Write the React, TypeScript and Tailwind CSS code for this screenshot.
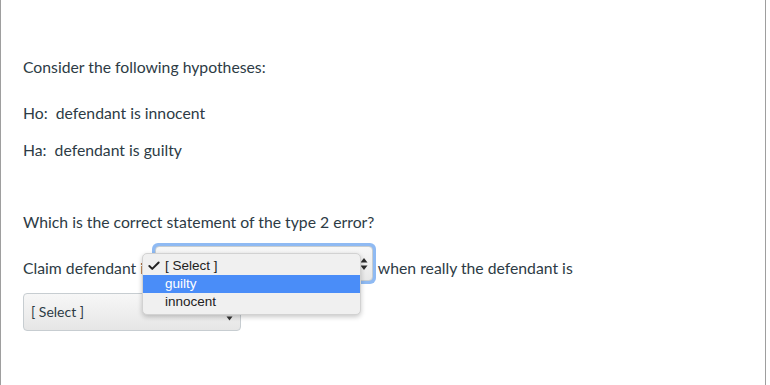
import { Check } from "lucide-react";

const menuOptions = [
  { label: "[ Select ]", checked: true },
  { label: "guilty", active: true },
  { label: "innocent" },
];

function UpDownArrows() {
  return (
    <svg width="8" height="14" viewBox="0 0 8 14" className="text-[#2b2b2b]">
      <path d="M4 1 L7.5 5.5 L0.5 5.5 Z" fill="currentColor" />
      <path d="M4 13 L7.5 8.5 L0.5 8.5 Z" fill="currentColor" />
    </svg>
  );
}

export default function App() {
  return (
    <div className="relative h-[385px] w-[766px] border-x border-[#9e9e9e] bg-white font-['Lato','Liberation_Sans',sans-serif] text-[15.75px] leading-[22px] text-[#2d3b45]">
      <div className="px-[22px] pt-[56px]">
        <p>Consider the following hypotheses:</p>

        <p className="mt-[24px]">Ho:&nbsp; defendant is innocent</p>
        <p className="mt-[15px]">Ha:&nbsp; defendant is guilty</p>

        <p className="mt-[50px]">Which is the correct statement of the type 2 error?</p>

        <div className="mt-[10px] flex items-start">
          <span className="pt-[14px]">Claim defendant is</span>
          <div className="ml-[1px] rounded-[6px] bg-[#8fbaf3] p-[3px]">
            <div className="flex h-[35px] w-[218px] items-center justify-end rounded-[4px] border border-[#c7cdd1] bg-gradient-to-b from-[#f7f7f7] to-[#e8e8e8] pr-[4px]">
              <UpDownArrows />
            </div>
          </div>
          <span className="ml-[2px] pt-[14px]">when really the defendant is</span>
        </div>

        <div className="mt-[9px] flex h-[38px] w-[218px] items-center justify-between rounded-[4px] border border-[#c7cdd1] bg-gradient-to-b from-[#f7f7f7] to-[#e6e6e6] pl-[7px] pr-[7px] text-[14px]">
          <span>[ Select ]</span>
          <svg width="7" height="5" viewBox="0 0 7 5" className="mt-[12px]">
            <path d="M0.5 0.5 L6.5 0.5 L3.5 4.5 Z" fill="#333" />
          </svg>
        </div>
      </div>

      {/* native select popup */}
      <div className="absolute left-[141px] top-[253px] w-[219px] rounded-[5px] border border-[#d2d2d2] bg-[#f0f0f0] py-[3px] font-['Liberation_Sans',sans-serif] text-[13.5px] leading-[18px] text-[#222] shadow-[0_2px_5px_rgba(0,0,0,0.22)]">
        {menuOptions.map((o) => (
          <div
            key={o.label}
            className={`flex h-[18px] items-center ${o.active ? "bg-[#4a8df8] text-white" : ""}`}
          >
            <span className="flex w-[18px] justify-end">
              {o.checked && <Check size={14} strokeWidth={3.4} className="text-[#222]" />}
            </span>
            <span className="ml-[4px]">{o.label}</span>
          </div>
        ))}
      </div>
    </div>
  );
}
